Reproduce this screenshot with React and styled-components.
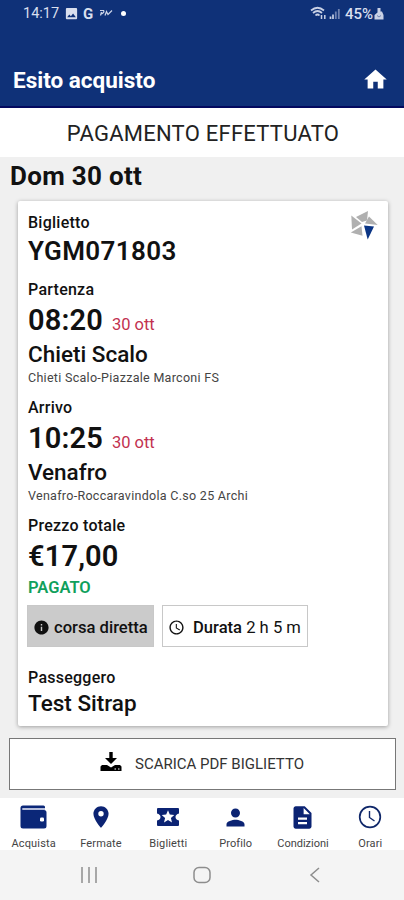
import React from "react";
import styled, { createGlobalStyle } from "styled-components";
import {
  MdHome,
  MdLocationOn,
  MdPerson,
  MdDescription,
  MdInfo,
  MdAccessTime,
  MdImage,
} from "react-icons/md";

const tabs = [
  { label: "Acquista", icon: <WalletIcon />, spacing: 0.15 },
  { label: "Fermate", icon: <MdLocationOn size={26} />, spacing: 0.15 },
  { label: "Biglietti", icon: <TicketIcon />, spacing: 0.15 },
  { label: "Profilo", icon: <MdPerson size={27} />, spacing: 0.1 },
  { label: "Condizioni", icon: <MdDescription size={27} />, spacing: 0 },
  { label: "Orari", icon: <ClockIcon />, spacing: 0.1 },
];

function WalletIcon() {
  return (
    <svg width="27" height="24" viewBox="0 0 27 24">
      <path d="M3 0.5H23.5Q25 .5 25 2V3H2.5V5H24Q26.5 5 26.5 7.5V21Q26.5 23.500 24 23.500H3Q.5 23.500 .5 21V3Q.5 .5 3 .5Z" fill="#0b2778" />
      <path d="M3 3H25V5H3Z" fill="#b4bddb" />
      <rect x="20" y="12.500" width="4" height="4" rx="1.300" fill="#fff" />
    </svg>
  );
}

function TicketIcon() {
  return (
    <svg width="22" height="18" viewBox="0 0 22 18">
      <path d="M1 0H21Q22 0 22 1V5.500Q18.500 6.500 18.500 9T22 12.500V17Q22 18 21 18H1Q0 18 0 17V12.500Q3.500 11.500 3.500 9T0 5.500V1Q0 0 1 0Z" fill="#0b2373" />
      <path d="M11 2.300 12.800 6.600 17.300 7 13.900 9.900 15 14.400 11 12 7 14.400 8.100 9.900 4.700 7 9.200 6.600Z" fill="#fff" />
    </svg>
  );
}

function ClockIcon() {
  return (
    <svg width="24" height="24" viewBox="0 0 24 24" fill="none" stroke="#0f2769">
      <circle cx="12" cy="12" r="10.300" strokeWidth="1.700" />
      <path d="M11.500 6V12.500L16.500 16" strokeWidth="1.400" />
    </svg>
  );
}

function PinwheelLogo() {
  return (
    <svg width="28" height="29" viewBox="0 0 28 29">
      <g fill="#b0b0b0">
        <path d="M6 6 18 0 17 9.500 12 11Z" />
        <path d="M1.300 4.500 11.500 12.500 2 18.500Z" />
        <path d="M19 5.500 27.700 14 15 12.500Z" />
        <path d="M11.500 15.300 12.500 24.700 .8 21.500Z" />
      </g>
      <path d="M14 14.500 24 15.500 17.700 28.500Z" fill="#0b3585" />
    </svg>
  );
}

const App = () => {
  return (
    <Screen>
      <GlobalStyle />
      <StatusBar>
        <StatusGroup>
          <Clock>14:17</Clock>
          <MdImage size={15} />
          <GLetter>G</GLetter>
          <svg width="14" height="9" viewBox="0 0 14 9" fill="none" stroke="#cdd5e8" strokeWidth="1.200">
            <path d="M1 1.500H4.500Q6 3 2.500 5M2.500 3 1.500 6.500M6 6.500 7.500 2.500 9 5.500 13 1.500" />
          </svg>
          <Dot />
        </StatusGroup>
        <StatusGroup>
          <svg width="32" height="15" viewBox="0 0 32 15" fill="none" stroke="#c9d1e6">
            <path d="M1 4.500Q7.500 -1 14 4.500M3 7Q7.500 3 12 7M5.500 9.500Q7.500 7.500 9.500 9.500" strokeWidth="1.700" />
            <path d="M11.500 9V13M14.800 13V9" strokeWidth="1.500" />
            <path d="M20.500 13V10.500M23 13V8.500" strokeWidth="1.700" />
            <path d="M25.800 13V5.500M28.800 13V3" strokeWidth="1.800" stroke="#7184b2" />
          </svg>
          <Battery>45%</Battery>
          <svg width="10" height="13" viewBox="0 0 10 13" fill="#c9d1e6">
            <path d="M3.500 1H6.500V4.500H8L9.500 8V12.500H.5V8L3.500 5.500Z" />
            <path d="M3 8.500 5 10 7 8.500" stroke="#7184b2" fill="none" />
          </svg>
        </StatusGroup>
      </StatusBar>
      <Header>
        <Title>Esito acquisto</Title>
        <MdHome size={27} />
      </Header>
      <Banner>PAGAMENTO EFFETTUATO</Banner>
      <Content>
        <Day>Dom 30 ott</Day>
        <Card>
          <CardTop>
            <div>
              <Label>Biglietto</Label>
              <Code>YGM071803</Code>
            </div>
            <PinwheelLogo />
          </CardTop>
          <Stop label="Partenza" time="08:20" date="30 ott" city="Chieti Scalo" place="Chieti Scalo-Piazzale Marconi FS" />
          <Stop label="Arrivo" time="10:25" date="30 ott" city="Venafro" place="Venafro-Roccaravindola C.so 25 Archi" />
          <Section>
            <Label>Prezzo totale</Label>
            <Big>€17,00</Big>
            <Paid>PAGATO</Paid>
          </Section>
          <Chips>
            <Chip $filled>
              <MdInfo size={17} />
              <b>corsa diretta</b>
            </Chip>
            <Chip>
              <MdAccessTime size={17} />
              <span>
                <b>Durata</b> 2 h 5 m
              </span>
            </Chip>
          </Chips>
          <Label>Passeggero</Label>
          <Passenger>Test Sitrap</Passenger>
        </Card>
        <Download>
          <svg width="22" height="20" viewBox="0 0 22 20">
            <path d="M9.300 0H12.700V6H17L11 12 5 6H9.300Z" />
            <path d="M2 13H7L11 15.500 15 13H20L21.500 14.500V19H.5V14.500Z" />
            <path d="M14.500 17H16M18 17H19.500" stroke="#fff" />
          </svg>
          <span>SCARICA PDF BIGLIETTO</span>
        </Download>
      </Content>
      <TabBar>
        {tabs.map((tab) => (
          <Tab key={tab.label} $spacing={tab.spacing}>
            <TabIcon>{tab.icon}</TabIcon>
            <span>{tab.label}</span>
          </Tab>
        ))}
      </TabBar>
      <SystemNav>
        <svg width="18" height="18" viewBox="0 0 18 18" stroke="#8d8d8d" strokeWidth="1.500">
          <path d="M2 1V17M9 1V17M16 1V17" />
        </svg>
        <svg width="18" height="18" viewBox="0 0 18 18" fill="none" stroke="#8d8d8d" strokeWidth="1.500">
          <rect x="1" y="1.500" width="16" height="15" rx="5" />
        </svg>
        <svg width="18" height="18" viewBox="0 0 18 18" fill="none" stroke="#8d8d8d" strokeWidth="1.500">
          <path d="M13 2 5 9 13 16" />
        </svg>
      </SystemNav>
    </Screen>
  );
};

const Stop = (props) => {
  return (
    <Section>
      <Label>{props.label}</Label>
      <TimeRow>
        <Big>{props.time}</Big>
        <DateText>{props.date}</DateText>
      </TimeRow>
      <City>{props.city}</City>
      <Place>{props.place}</Place>
    </Section>
  );
};

const GlobalStyle = createGlobalStyle`
  * {
    box-sizing: border-box;
  }
  body {
    margin: 0;
    font-family: Roboto, "Liberation Sans", sans-serif;
    color: #111;
  }
  svg {
    display: block;
    flex: none;
  }
`;
const Screen = styled.div`
  display: flex;
  flex-direction: column;
  width: 404px;
  height: 900px;
  overflow: hidden;
  background: #f0f0f0;
  white-space: nowrap;
`;
const StatusBar = styled.div`
  display: flex;
  justify-content: space-between;
  height: 27px;
  padding: 0 20px 0 23px;
  background: #0f3178;
  color: #d9dfee;
`;
const StatusGroup = styled.div`
  display: flex;
  align-items: center;
  gap: 4px;
`;
const Clock = styled.span`
  font-size: 14.5px;
  margin-right: 1px;
`;
const GLetter = styled.span`
  margin-right: 2px;
  font-size: 15px;
  font-weight: 700;
`;
const Dot = styled.span`
  width: 5px;
  height: 5px;
  margin-left: 4px;
  border-radius: 50%;
  background: #fff;
`;
const Battery = styled.span`
  font-size: 15px;
  font-weight: 500;
  margin-left: -1px;
  margin-right: -3px;
`;
const Header = styled.header`
  display: flex;
  align-items: center;
  justify-content: space-between;
  height: 81px;
  padding: 26px 15px 0 13px;
  background: #0f3178;
  border-bottom: 2px solid #03095f;
  color: #fff;
`;
const Title = styled.h1`
  margin: 0;
  font-size: 22.5px;
  font-weight: 700;
`;
const Banner = styled.div`
  height: 49px;
  line-height: 52px;
  padding-left: 2px;
  background: #fff;
  text-align: center;
  font-size: 22px;
  letter-spacing: 0.25px;
  color: #222;
`;
const Content = styled.main`
  flex: 1;
  padding: 0 8px 0 9px;
`;
const Day = styled.h2`
  margin: 0;
  padding-left: 1px;
  height: 44px;
  line-height: 38px;
  font-size: 26px;
  font-weight: 700;
  letter-spacing: 0.3px;
`;
const Card = styled.section`
  height: 525px;
  margin: 0 8px 0 9px;
  padding: 10px 10px 0 10px;
  background: #fff;
  border-radius: 2px;
  box-shadow: 0 1px 4px rgba(0, 0, 0, 0.35);
`;
const CardTop = styled.div`
  display: flex;
  justify-content: space-between;
`;
const Section = styled.div`
  margin-top: 9px;
`;
const Label = styled.div`
  line-height: 23px;
  margin-bottom: -1px;
  font-size: 16px;
  font-weight: 500;
  letter-spacing: 0.25px;
`;
const Code = styled.div`
  line-height: 36px;
  font-size: 26px;
  font-weight: 600;
  letter-spacing: 0.4px;
`;
const TimeRow = styled.div`
  display: flex;
  align-items: baseline;
  gap: 10px;
`;
const Big = styled.div`
  line-height: 40px;
  font-size: 29px;
  font-weight: 600;
  letter-spacing: 0.15px;
`;
const DateText = styled.span`
  margin-left: -1px;
  font-size: 16.5px;
  color: #c2314f;
`;
const City = styled.div`
  line-height: 28px;
  font-size: 22.5px;
  font-weight: 500;
`;
const Place = styled.div`
  line-height: 19px;
  font-size: 12.5px;
  letter-spacing: 0.29px;
  color: #444;
`;
const Paid = styled.div`
  line-height: 23px;
  margin-bottom: -1px;
  font-size: 16.5px;
  font-weight: 600;
  color: #10a05c;
`;
const Chips = styled.div`
  display: flex;
  gap: 8px;
  margin: 7px 0 19px -1px;
`;
const Chip = styled.div`
  display: flex;
  align-items: center;
  gap: ${(props) => (props.$filled ? "4px" : "8px")};
  width: ${(props) => (props.$filled ? "127px" : "146px")};
  height: 42px;
  padding-top: 2px;
  padding-left: 5px;
  border: 1px solid #c8c8c8;
  background: ${(props) => (props.$filled ? "#cbcbcb" : "#fff")};
  font-size: 16.6px;
  b {
    font-weight: 500;
  }
`;
const Passenger = styled.div`
  line-height: 31px;
  font-size: 22.5px;
  font-weight: 500;
`;
const Download = styled.div`
  display: flex;
  align-items: center;
  gap: 13px;
  height: 52px;
  margin-top: 12px;
  padding-left: 90px;
  border: 1px solid #777;
  background: #fff;
  font-size: 15px;
  color: #333;
  svg {
    margin-top: -4px;
  }
`;
const TabBar = styled.nav`
  display: grid;
  grid-template-columns: repeat(6, 1fr);
  height: 52px;
  background: #fff;
`;
const Tab = styled.div`
  display: flex;
  flex-direction: column;
  align-items: center;
  font-size: 11px;
  line-height: 15px;
  letter-spacing: ${(props) => props.$spacing}px;
  color: #444;
`;
const TabIcon = styled.div`
  display: flex;
  align-items: center;
  justify-content: center;
  height: 38px;
  color: #0b2373;
`;
const SystemNav = styled.div`
  display: flex;
  justify-content: space-between;
  align-items: center;
  height: 50px;
  padding: 0 80px 0 80px;
  background: #f4f4f4;
`;
export default App;
